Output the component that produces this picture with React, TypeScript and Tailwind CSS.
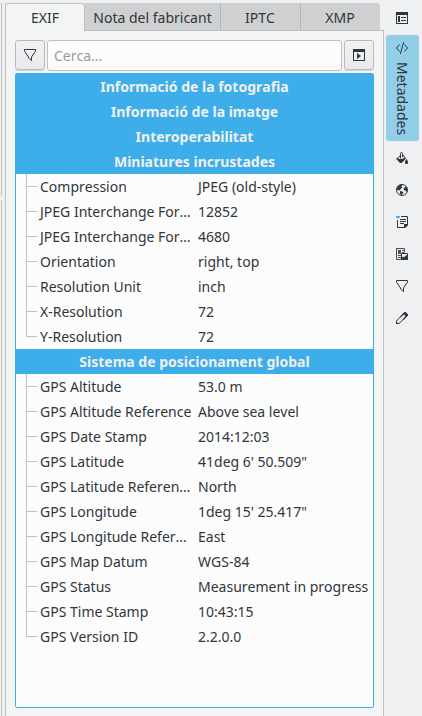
import type { ReactNode } from "react";

const thumbnails: [string, string][] = [
  ["Compression", "JPEG (old-style)"],
  ["JPEG Interchange For…", "12852"],
  ["JPEG Interchange For…", "4680"],
  ["Orientation", "right, top"],
  ["Resolution Unit", "inch"],
  ["X-Resolution", "72"],
  ["Y-Resolution", "72"],
];

const gps: [string, string][] = [
  ["GPS Altitude", "53.0 m"],
  ["GPS Altitude Reference", "Above sea level"],
  ["GPS Date Stamp", "2014:12:03"],
  ["GPS Latitude", "41deg 6' 50.509\""],
  ["GPS Latitude Referen…", "North"],
  ["GPS Longitude", "1deg 15' 25.417\""],
  ["GPS Longitude Refer…", "East"],
  ["GPS Map Datum", "WGS-84"],
  ["GPS Status", "Measurement in progress"],
  ["GPS Time Stamp", "10:43:15"],
  ["GPS Version ID", "2.2.0.0"],
];

function Icon({ children }: { children: ReactNode }) {
  return (
    <svg width="16" height="16" viewBox="0 0 16 16" fill="none" className="block shrink-0 text-[#31363b]">
      {children}
    </svg>
  );
}

function FilterIcon() {
  return (
    <Icon>
      <path d="M2.5 2.5h11v1.7L9.5 10v3.5L6.5 11V10L2.5 4.2z" stroke="currentColor" />
    </Icon>
  );
}

function TreeIcon() {
  return (
    <Icon>
      <path fill="currentColor" fillRule="evenodd" d="M2 2h12v12H2zM3 5v8h10V5z" />
      <path fill="currentColor" d="M4 6h2v6H4zM7 7h5v1H7zM7 10h5v1H7z" />
    </Icon>
  );
}

function PlayWindowIcon() {
  return (
    <Icon>
      <path fill="currentColor" fillRule="evenodd" d="M2 2h12v12H2zM3 5v8h10V5z" />
      <path fill="currentColor" d="M6 6v6l4-3z" />
    </Icon>
  );
}

function CodeIcon() {
  return (
    <Icon>
      <path stroke="currentColor" d="M5.5 4.5L2.5 8l3 3.5M10.5 4.5l3 3.5-3 3.5M9.7 2L6.3 14" />
    </Icon>
  );
}

function FillIcon() {
  return (
    <Icon>
      <path stroke="currentColor" d="M6.5 8V3.5a1 1 0 0 1 2 0V7M6.5 5.5l-3.3 3M8.5 4.5l3.2 4" />
      <path fill="currentColor" d="M2 8.7l2-1.2v1.3h5.5L10 7l1.8 1.7L7.7 13H6zM12.5 9c1 1.5 1.7 2.6 1.7 3.4a1.6 1.6 0 0 1-3.3 0c0-.8.6-1.9 1.6-3.4z" />
    </Icon>
  );
}

function GlobeIcon() {
  return (
    <Icon>
      <circle cx="8" cy="8" r="5.5" stroke="currentColor" />
      <path fill="currentColor" d="M3 5l3-2.5 2.5.3L7.5 4.5l.8 1L6.5 7 6 8.4 4.5 8 3 8.2zM6 9l3 .7.3 1.3L7.5 13 6 12zM9.7 6.2L11 5l1.5-.5 1 3-1 2.5-1.2-1.5-1.5-.6z" />
    </Icon>
  );
}

function CaptionIcon() {
  return (
    <Icon>
      <path stroke="currentColor" d="M7 2.5h6.5V11L11 13.5H3.5V6M6 5.5h6M6 7.5h6M6 9.5h4" />
      <path fill="currentColor" d="M10 14v-4h4v1l-3 3z" />
      <path fill="#3daee9" d="M2 2h4v1L4.5 4.5h-1L2 3z" />
    </Icon>
  );
}

function VersionsIcon() {
  return (
    <Icon>
      <path stroke="#4d5155" d="M2.5 2.5h8v4M2.5 2v11.5H7M4 9.5h3M4 11.5h3M8 4.5h2M8 6.5h2" />
      <path fill="#4d5155" d="M4 4h3v4H4z" />
      <path stroke="currentColor" d="M7.5 7.5h6v6h-6z" />
      <path fill="currentColor" d="M7 14v-2l2-1.5 1 .8L14 8v6z" />
    </Icon>
  );
}

function PencilIcon() {
  return (
    <Icon>
      <path stroke="currentColor" d="M2.5 13.5V11l8-8.5h1l2 2v1l-8.5 8z" />
      <path fill="currentColor" d="M6 6.5L10.5 2h1L14 4.5v1L9.5 10 8.7 9.2 11.5 6 10 4.5 6.8 7.3zM2 11.2L4.8 14H2z" />
    </Icon>
  );
}

function Header({ children }: { children: ReactNode }) {
  return (
    <div className="flex h-[25px] items-center justify-center bg-[#3daee9] font-bold text-[#eff0f1]">
      {children}
    </div>
  );
}

function Rows({ items }: { items: [string, string][] }) {
  return (
    <div>
      {items.map(([name, value], i) => (
        <div key={i} className="flex h-[25px] items-center pl-[10px]">
          <div className="flex h-full w-[14px] shrink-0 flex-col">
            <div className="h-[13px] w-[11px] shrink-0 border-b border-l border-[#bfc1c2]" />
            {i < items.length - 1 && <div className="h-3 border-l border-[#bfc1c2]" />}
          </div>
          <span className="w-[158px] shrink-0">{name}</span>
          <span>{value}</span>
        </div>
      ))}
    </div>
  );
}

function ToolButton({ children }: { children: ReactNode }) {
  return (
    <button className="flex h-[30px] w-[30px] shrink-0 items-center justify-center rounded-[3px] border border-[#b7b9bb] bg-linear-to-b from-[#f1f2f3] to-[#e8e9ea] shadow-[0_1px_0_#d3d5d6]">
      {children}
    </button>
  );
}

export default function App() {
  return (
    <div className="flex h-[716px] w-[422px] overflow-hidden bg-[#eff0f1] font-['Noto_Sans',sans-serif] text-sm leading-[25px] whitespace-nowrap text-[#31363b] [font-kerning:none]">
      <div className="flex w-[5px] shrink-0 flex-col gap-1 pt-[3px]">
        <div className="h-[193px] w-[2px] rounded-br-[3px] border-r border-[#bdbfc0]" />
        <div className="w-[2px] flex-1 rounded-tr-[3px] border-r border-[#bdbfc0]" />
      </div>
      <div className="flex w-[379px] shrink-0 flex-col pt-[3px]">
        <div className="flex h-[27px] shrink-0">
          <div className="flex w-[80px] items-center justify-center rounded-t-[3px] border-x border-t border-[#bdbfc0] bg-[#f3f5f4]">EXIF</div>
          <div className="flex w-[136px] items-center justify-center border-r border-[#b5b7b9] bg-[#cfd0d1] pt-px">Nota del fabricant</div>
          <div className="flex w-[80px] items-center justify-center border-r border-[#b5b7b9] bg-[#cfd0d1] pt-px pr-px">IPTC</div>
          <div className="flex w-[79px] items-center justify-center rounded-tr-[3px] bg-[#cfd0d1] pt-px pr-px">XMP</div>
        </div>
        <div className="flex h-px shrink-0">
          <div className="w-[79px] border-l border-[#bdbfc0] bg-[#f3f5f4]" />
          <div className="flex-1 bg-[#bdbfc0]" />
        </div>
        <div className="flex flex-1 flex-col border-x border-[#bdbfc0] bg-[#f3f5f4] px-[9px] pt-[9px] pb-2">
          <div className="flex h-[33px] shrink-0 gap-[2px]">
            <ToolButton><FilterIcon /></ToolButton>
            <div className="flex h-[31px] flex-1 items-center rounded-[3px] border border-[#bdbfc0] bg-[#fcfcfc] pl-[6px] text-[#999c9e]">Cerca...</div>
            <ToolButton><PlayWindowIcon /></ToolButton>
          </div>
          <div className="flex-1 rounded-[2px] border border-[#3daee9] bg-[#fcfcfc]">
            <Header>Informació de la fotografia</Header>
            <Header>Informació de la imatge</Header>
            <Header>Interoperabilitat</Header>
            <Header>Miniatures incrustades</Header>
            <Rows items={thumbnails} />
            <Header>Sistema de posicionament global</Header>
            <Rows items={gps} />
          </div>
        </div>
      </div>
      <div className="flex w-9 shrink-0 flex-col items-center pt-[10px]">
        <TreeIcon />
        <div className="mt-[9px] flex h-[106px] w-[33px] flex-col items-center rounded-[3px] bg-[#93cee9] pt-[5px]">
          <CodeIcon />
          <span className="mt-[6px] flex w-[25px] [writing-mode:vertical-rl]">Metadades</span>
        </div>
        <div className="mt-[9px] flex flex-col gap-4">
          <FillIcon />
          <GlobeIcon />
          <CaptionIcon />
          <VersionsIcon />
          <FilterIcon />
          <PencilIcon />
        </div>
      </div>
    </div>
  );
}
